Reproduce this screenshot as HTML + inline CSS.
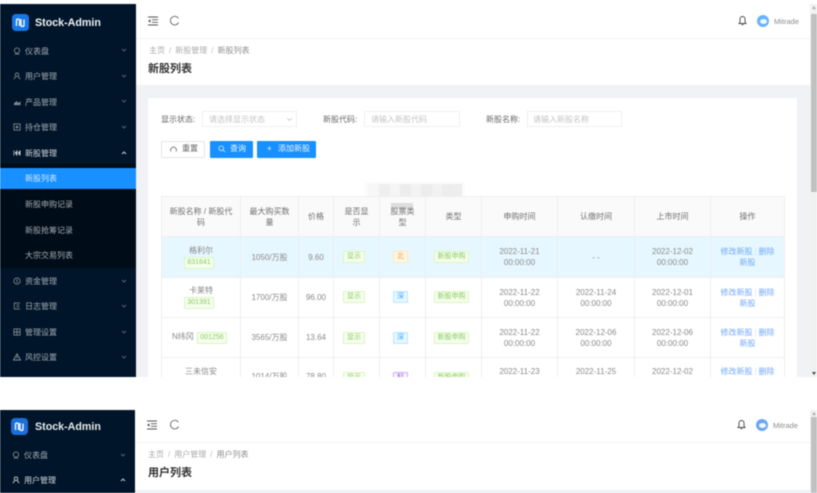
<!DOCTYPE html>
<html lang="zh">
<head>
<meta charset="utf-8">
<style>
html,body{margin:0;padding:0;width:817px;height:493px;overflow:hidden;background:#fff;font-family:"Liberation Sans","Noto Sans CJK SC",sans-serif;}
#root{position:relative;width:817px;height:493px;overflow:hidden;filter:blur(.5px);}
.a{position:absolute;}
.t{position:absolute;white-space:nowrap;font-size:8px;line-height:12px;margin-top:1px;}
.m{position:absolute;left:25px;color:#a3abb3;font-size:8px;line-height:12px;white-space:nowrap;margin-top:1px;}
.ic{position:absolute;left:13px;width:8px;height:8px;}
.ch{position:absolute;left:121px;width:6px;height:4px;}
.c{position:absolute;text-align:center;color:#8a8a8a;font-size:8px;line-height:11px;display:flex;align-items:center;justify-content:center;}
.hd{color:#6f6f6f;}
.tag{display:block;box-sizing:border-box;border:1px solid #d9f7be;background:#f6ffed;color:#8bc766;font-size:7px;line-height:10px;height:12px;border-radius:1px;text-align:center;}
.l{position:absolute;background:#eeeeee;}
.lk{color:#6fa8f5;white-space:nowrap;}
.sep{color:#d5e6fb;margin:0 2px;}
</style>
</head>
<body>
<div id="root">
<!-- top frame sidebar -->
<div class="a" style="left:0;top:4px;width:136px;height:373px;background:#001529;"></div>
<div class="a" style="left:0;top:164px;width:136px;height:104px;background:#000c17;"></div>
<div class="a" style="left:0;top:168px;width:136px;height:21px;background:#1890ff;"></div>
<div class="a" style="left:12px;top:14px;width:17px;height:17px;border-radius:4px;background:#1677e6;"></div>
<svg class="a" style="left:12px;top:14px" width="17" height="17" viewBox="0 0 17 17"><path d="M4.500 12V6.500Q4.500 5 6 5T7.500 6.500V12M9 5V11Q9 12.500 10.500 12.500T12 11V5.500" fill="none" stroke="#fff" stroke-width="1.300"/></svg>
<div class="t" style="left:35px;top:15px;color:#f0f2f5;font-size:10.700px;line-height:15px;font-weight:bold;">Stock-Admin</div>

<svg class="ic" style="top:47px" viewBox="0 0 9 9"><circle cx="4.500" cy="4" r="3" fill="none" stroke="#7d8791"/><path d="M2 8H7" stroke="#7d8791"/></svg><div class="m" style="top:45px">仪表盘</div>
<svg class="ic" style="top:72px" viewBox="0 0 9 9"><circle cx="4.500" cy="3" r="2" fill="none" stroke="#7d8791"/><path d="M1 8L3 5M8 8L6 5" stroke="#7d8791"/></svg><div class="m" style="top:70px">用户管理</div>
<svg class="ic" style="top:98px" viewBox="0 0 9 9"><path d="M1 1V8H8.500V4L6 5.500 4 3.500 1 6Z" fill="#7d8791"/></svg><div class="m" style="top:96px">产品管理</div>
<svg class="ic" style="top:123px" viewBox="0 0 9 9"><rect x="1" y="1" width="7" height="7" fill="none" stroke="#7d8791"/><circle cx="4.500" cy="4.500" r="1.500" fill="#7d8791"/></svg><div class="m" style="top:121px">持仓管理</div>
<svg class="ic" style="top:149px" viewBox="0 0 9 9"><path d="M1 1.500V7.500M2.500 4.500L4.500 2V7L2.500 4.500M8 1.500V7.500M6 4.500L7.500 2.500V6.500Z" stroke="#d0d4d8" fill="#d0d4d8" stroke-width=".8"/></svg><div class="m" style="top:147px;color:#d6dade">新股管理</div>
<div class="m" style="top:172px;color:#d8ebff">新股列表</div>
<div class="m" style="top:198px">新股申购记录</div>
<div class="m" style="top:224px">新股抢筹记录</div>
<div class="m" style="top:249px">大宗交易列表</div>
<svg class="ic" style="top:277px" viewBox="0 0 9 9"><circle cx="4.500" cy="4.500" r="3.500" fill="none" stroke="#7d8791"/><path d="M4.500 2.500V6.500" stroke="#7d8791"/></svg><div class="m" style="top:275px">资金管理</div>
<svg class="ic" style="top:302px" viewBox="0 0 9 9"><path d="M1 1H8M1.500 1V8M1.500 8H8M4 3.500H7M4 5.500H7" fill="none" stroke="#7d8791"/></svg><div class="m" style="top:300px">日志管理</div>
<svg class="ic" style="top:328px" viewBox="0 0 9 9"><path d="M1 1H8V8H1ZM1 4.500H8M4.500 1V8" fill="none" stroke="#7d8791"/></svg><div class="m" style="top:326px">管理设置</div>
<svg class="ic" style="top:353px" viewBox="0 0 9 9"><path d="M4.500 1L8.500 8H.5ZM4.500 3.500V6" fill="none" stroke="#8d969f"/></svg><div class="m" style="top:351px">风控设置</div>

<svg class="ch" style="top:48px" viewBox="0 0 6 4"><path d="M1 1L3 3 5 1" fill="none" stroke="#56626f"/></svg>
<svg class="ch" style="top:74px" viewBox="0 0 6 4"><path d="M1 1L3 3 5 1" fill="none" stroke="#56626f"/></svg>
<svg class="ch" style="top:99px" viewBox="0 0 6 4"><path d="M1 1L3 3 5 1" fill="none" stroke="#56626f"/></svg>
<svg class="ch" style="top:125px" viewBox="0 0 6 4"><path d="M1 1L3 3 5 1" fill="none" stroke="#56626f"/></svg>
<svg class="ch" style="top:151px" viewBox="0 0 6 4"><path d="M1 3L3 1 5 3" fill="none" stroke="#c8ccd0"/></svg>
<svg class="ch" style="top:279px" viewBox="0 0 6 4"><path d="M1 1L3 3 5 1" fill="none" stroke="#56626f"/></svg>
<svg class="ch" style="top:304px" viewBox="0 0 6 4"><path d="M1 1L3 3 5 1" fill="none" stroke="#56626f"/></svg>
<svg class="ch" style="top:330px" viewBox="0 0 6 4"><path d="M1 1L3 3 5 1" fill="none" stroke="#56626f"/></svg>
<svg class="ch" style="top:355px" viewBox="0 0 6 4"><path d="M1 1L3 3 5 1" fill="none" stroke="#56626f"/></svg>

<!-- top frame main -->
<div class="a" style="left:136px;top:85px;width:674px;height:292px;background:#f0f2f5;"></div>
<div class="a" style="left:136px;top:38px;width:674px;height:1px;background:#f3f3f3;"></div>
<svg class="a" style="left:148px;top:16px" width="10" height="10" viewBox="0 0 10 10"><path d="M0 1H10M4 3.700H10M4 6.300H10M0 9H10" stroke="#555" stroke-width=".9"/><path d="M0 5L2.500 3.300V6.700Z" fill="#555"/></svg>
<svg class="a" style="left:169px;top:15px" width="11" height="11" viewBox="0 0 11 11"><path d="M9.300 3.200A4.300 4.300 0 1 0 9.600 7.500" fill="none" stroke="#666" stroke-width=".9"/></svg>
<svg class="a" style="left:738px;top:15px" width="9" height="11" viewBox="0 0 9 11"><path d="M1 8.500H8L7 7V4A2.500 2.500 0 0 0 2 4V7ZM3.500 9.700H5.500" fill="none" stroke="#444" stroke-width=".9"/></svg>
<div class="a" style="left:757px;top:15px;width:12px;height:12px;border-radius:50%;background:#69b1ff;"></div>
<div class="a" style="left:760px;top:19px;width:7px;height:5px;border-radius:50%;background:#f0f7ff;"></div>
<div class="t" style="left:774px;top:15px;color:#8c8c8c;font-size:7.500px;">Mitrade</div>

<div class="t" style="left:149px;top:44px;color:#aaa;">主页<span style="margin:0 4px;color:#bbb">/</span>新股管理<span style="margin:0 4px;color:#bbb">/</span><span style="color:#8c8c8c">新股列表</span></div>
<div class="t" style="left:148px;top:61px;color:#333;font-size:11px;line-height:15px;font-weight:bold;">新股列表</div>

<!-- card -->
<div class="a" style="left:148px;top:98px;width:649px;height:279px;background:#fff;border-radius:1px;"></div>
<div class="t" style="left:161px;top:113px;color:#666;">显示状态:</div>
<div class="a" style="left:202px;top:111px;width:95px;height:16px;box-sizing:border-box;border:1px solid #efefef;background:#fff;"></div>
<div class="t" style="left:209px;top:113px;color:#c4c4c4;">请选择显示状态</div>
<svg class="a" style="left:286px;top:117px" width="7" height="5" viewBox="0 0 7 5"><path d="M1 1L3.500 3.500 6 1" fill="none" stroke="#c8c8c8" stroke-width=".8"/></svg>
<div class="t" style="left:323px;top:113px;color:#666;">新股代码:</div>
<div class="a" style="left:364px;top:111px;width:96px;height:16px;box-sizing:border-box;border:1px solid #efefef;"></div>
<div class="t" style="left:371px;top:113px;color:#c4c4c4;">请输入新股代码</div>
<div class="t" style="left:486px;top:113px;color:#666;">新股名称:</div>
<div class="a" style="left:527px;top:111px;width:95px;height:16px;box-sizing:border-box;border:1px solid #efefef;"></div>
<div class="t" style="left:533px;top:113px;color:#c4c4c4;">请输入新股名称</div>

<div class="a" style="left:161px;top:141px;width:44px;height:17px;box-sizing:border-box;border:1px solid #e6e6e6;border-radius:1px;background:#fff;"></div>
<svg class="a" style="left:170px;top:146px" width="7" height="7" viewBox="0 0 7 7"><path d="M1 5.500A2.900 2.900 0 1 1 6 5.500" fill="none" stroke="#666" stroke-width=".8"/></svg>
<div class="t" style="left:182px;top:142px;color:#666;">重置</div>
<div class="a" style="left:210px;top:141px;width:43px;height:17px;background:#1890ff;border-radius:1px;"></div>
<svg class="a" style="left:218px;top:145px" width="8" height="8" viewBox="0 0 8 8"><circle cx="3.300" cy="3.300" r="2.300" fill="none" stroke="#dcecff" stroke-width=".8"/><path d="M5 5L7 7" stroke="#dcecff" stroke-width=".8"/></svg>
<div class="t" style="left:230px;top:142px;color:#eef6ff;">查询</div>
<div class="a" style="left:257px;top:141px;width:59px;height:17px;background:#1890ff;border-radius:1px;"></div>
<div class="t" style="left:267px;top:142px;color:#eef6ff;">+</div>
<div class="t" style="left:278px;top:142px;color:#eef6ff;">添加新股</div>

<!-- mosaic -->
<div class="a" style="left:365px;top:182px;width:100px;height:23px;background:#fbfbfb;"></div>
<div class="a" style="left:368px;top:184px;width:11px;height:19px;background:#f7f7f7;"></div>
<div class="a" style="left:379px;top:184px;width:11px;height:19px;background:#efefef;"></div>
<div class="a" style="left:390px;top:184px;width:10px;height:19px;background:#f5f5f5;"></div>
<div class="a" style="left:400px;top:184px;width:11px;height:19px;background:#ececec;"></div>
<div class="a" style="left:411px;top:184px;width:10px;height:19px;background:#f3f3f3;"></div>
<div class="a" style="left:421px;top:184px;width:11px;height:19px;background:#ececec;"></div>
<div class="a" style="left:432px;top:184px;width:10px;height:19px;background:#f2f2f2;"></div>
<div class="a" style="left:442px;top:184px;width:10px;height:19px;background:#ededed;"></div>
<div class="a" style="left:452px;top:184px;width:10px;height:19px;background:#eeeeee;"></div>

<!-- table -->
<div class="a" style="left:161px;top:196px;width:624px;height:40px;background:#fafafa;"></div>
<div class="a" style="left:391px;top:203px;width:22px;height:6px;background:#dddddd;"></div>
<div class="a" style="left:161px;top:236px;width:624px;height:41px;background:#e6f7ff;"></div>
<div class="l" style="left:161px;top:196px;width:624px;height:1px"></div>
<div class="l" style="left:161px;top:236px;width:624px;height:1px"></div>
<div class="l" style="left:161px;top:277px;width:624px;height:1px"></div>
<div class="l" style="left:161px;top:317px;width:624px;height:1px"></div>
<div class="l" style="left:161px;top:357px;width:624px;height:1px"></div>
<div class="l" style="left:161px;top:196px;width:1px;height:181px"></div>
<div class="l" style="left:240px;top:196px;width:1px;height:181px"></div>
<div class="l" style="left:298px;top:196px;width:1px;height:181px"></div>
<div class="l" style="left:333px;top:196px;width:1px;height:181px"></div>
<div class="l" style="left:379px;top:196px;width:1px;height:181px"></div>
<div class="l" style="left:425px;top:196px;width:1px;height:181px"></div>
<div class="l" style="left:481px;top:196px;width:1px;height:181px"></div>
<div class="l" style="left:557px;top:196px;width:1px;height:181px"></div>
<div class="l" style="left:634px;top:196px;width:1px;height:181px"></div>
<div class="l" style="left:710px;top:196px;width:1px;height:181px"></div>
<div class="l" style="left:784px;top:196px;width:1px;height:181px"></div>

<!-- header -->
<div class="c hd" style="left:162px;top:197px;width:78px;height:39px;"><div>新股名称 / 新股代<br>码</div></div>
<div class="c hd" style="left:241px;top:197px;width:57px;height:39px;"><div>最大购买数<br>量</div></div>
<div class="c hd" style="left:299px;top:197px;width:34px;height:39px;">价格</div>
<div class="c hd" style="left:334px;top:197px;width:45px;height:39px;"><div>是否显<br>示</div></div>
<div class="c hd" style="left:380px;top:197px;width:45px;height:39px;"><div>股票类<br>型</div></div>
<div class="c hd" style="left:426px;top:197px;width:55px;height:39px;">类型</div>
<div class="c hd" style="left:482px;top:197px;width:75px;height:39px;">申购时间</div>
<div class="c hd" style="left:558px;top:197px;width:76px;height:39px;">认缴时间</div>
<div class="c hd" style="left:635px;top:197px;width:75px;height:39px;">上市时间</div>
<div class="c hd" style="left:711px;top:197px;width:73px;height:39px;">操作</div>

<!-- row 1 -->
<div class="t" style="left:162px;top:244px;width:78px;text-align:center;color:#888;">格利尔</div>
<div class="tag a" style="left:184px;top:257px;width:30px;">831641</div>
<div class="c" style="left:241px;top:237px;width:57px;height:40px;">1050/万股</div>
<div class="c" style="left:299px;top:237px;width:34px;height:40px;">9.60</div>
<div class="tag a" style="left:343px;top:251px;width:22px;">显示</div>
<div class="tag a" style="left:393px;top:251px;width:15px;background:#fff7e6;border-color:#ffe7ba;color:#fa9a3c;">北</div>
<div class="tag a" style="left:434px;top:251px;width:35px;">新股申购</div>
<div class="c" style="left:482px;top:237px;width:75px;height:40px;"><div>2022-11-21<br>00:00:00</div></div>
<div class="c" style="left:558px;top:237px;width:76px;height:40px;">- -</div>
<div class="c" style="left:635px;top:237px;width:75px;height:40px;"><div>2022-12-02<br>00:00:00</div></div>
<div class="c lk" style="left:711px;top:237px;width:73px;height:40px;"><div>修改新股<span class="sep">|</span>删除<br>新股</div></div>

<!-- row 2 -->
<div class="t" style="left:162px;top:284px;width:78px;text-align:center;color:#888;">卡莱特</div>
<div class="tag a" style="left:184px;top:297px;width:30px;">301391</div>
<div class="c" style="left:241px;top:278px;width:57px;height:39px;">1700/万股</div>
<div class="c" style="left:299px;top:278px;width:34px;height:39px;">96.00</div>
<div class="tag a" style="left:343px;top:291px;width:22px;">显示</div>
<div class="tag a" style="left:393px;top:291px;width:15px;background:#e6f7ff;border-color:#bae7ff;color:#40a9ff;">深</div>
<div class="tag a" style="left:434px;top:291px;width:35px;">新股申购</div>
<div class="c" style="left:482px;top:278px;width:75px;height:39px;"><div>2022-11-22<br>00:00:00</div></div>
<div class="c" style="left:558px;top:278px;width:76px;height:39px;"><div>2022-11-24<br>00:00:00</div></div>
<div class="c" style="left:635px;top:278px;width:75px;height:39px;"><div>2022-12-01<br>00:00:00</div></div>
<div class="c lk" style="left:711px;top:278px;width:73px;height:39px;"><div>修改新股<span class="sep">|</span>删除<br>新股</div></div>

<!-- row 3 -->
<div class="t" style="left:172px;top:330px;color:#888;">N纬冈</div>
<div class="tag a" style="left:197px;top:332px;width:30px;">001256</div>
<div class="c" style="left:241px;top:318px;width:57px;height:39px;">3565/万股</div>
<div class="c" style="left:299px;top:318px;width:34px;height:39px;">13.64</div>
<div class="tag a" style="left:343px;top:332px;width:22px;">显示</div>
<div class="tag a" style="left:393px;top:332px;width:15px;background:#e6f7ff;border-color:#bae7ff;color:#40a9ff;">深</div>
<div class="tag a" style="left:434px;top:332px;width:35px;">新股申购</div>
<div class="c" style="left:482px;top:318px;width:75px;height:39px;"><div>2022-11-22<br>00:00:00</div></div>
<div class="c" style="left:558px;top:318px;width:76px;height:39px;"><div>2022-12-06<br>00:00:00</div></div>
<div class="c" style="left:635px;top:318px;width:75px;height:39px;"><div>2022-12-06<br>00:00:00</div></div>
<div class="c lk" style="left:711px;top:318px;width:73px;height:39px;"><div>修改新股<span class="sep">|</span>删除<br>新股</div></div>

<!-- row 4 -->
<div class="t" style="left:162px;top:365px;width:78px;text-align:center;color:#888;">三未信安</div>
<div class="t" style="left:241px;top:370px;width:57px;text-align:center;color:#8a8a8a;">1014/万股</div>
<div class="t" style="left:299px;top:370px;width:34px;text-align:center;color:#8a8a8a;">78.80</div>
<div class="tag a" style="left:343px;top:372px;width:22px;">显示</div>
<div class="tag a" style="left:393px;top:372px;width:15px;background:#f9f0ff;border-color:#d3adf7;color:#9254de;">科</div>
<div class="tag a" style="left:434px;top:372px;width:35px;">新股申购</div>
<div class="t" style="left:482px;top:365px;width:75px;text-align:center;color:#8a8a8a;">2022-11-23</div>
<div class="t" style="left:558px;top:365px;width:76px;text-align:center;color:#8a8a8a;">2022-11-25</div>
<div class="t" style="left:635px;top:365px;width:75px;text-align:center;color:#8a8a8a;">2022-12-02</div>
<div class="t lk" style="left:711px;top:365px;width:73px;text-align:center;">修改新股<span class="sep">|</span>删除</div>

<!-- scrollbar top -->
<div class="a" style="left:810px;top:4px;width:7px;height:373px;background:#f1f1f1;"></div>
<div class="a" style="left:811px;top:14px;width:6px;height:178px;background:#c1c1c1;"></div>
<div class="a" style="left:812px;top:6px;border-left:2px solid transparent;border-right:2px solid transparent;border-bottom:3px solid #aaa;"></div>
<div class="a" style="left:812px;top:372px;border-left:2px solid transparent;border-right:2px solid transparent;border-top:3px solid #444;"></div>

<!-- white gap -->
<div class="a" style="left:0;top:377px;width:817px;height:33px;background:#fff;"></div>

<!-- bottom frame -->
<div class="a" style="left:0;top:410px;width:135px;height:83px;background:#001529;"></div>
<div class="a" style="left:11px;top:418px;width:17px;height:17px;border-radius:4px;background:#1a6fd8;"></div>
<svg class="a" style="left:11px;top:418px" width="17" height="17" viewBox="0 0 17 17"><path d="M4.500 12V6.500Q4.500 5 6 5T7.500 6.500V12M9 5V11Q9 12.500 10.500 12.500T12 11V5.500" fill="none" stroke="#fff" stroke-width="1.300"/></svg>
<div class="t" style="left:35px;top:419px;color:#e8eaed;font-size:10.700px;line-height:15px;font-weight:bold;">Stock-Admin</div>
<svg class="ic" style="top:451px;left:12px" viewBox="0 0 9 9"><circle cx="4.500" cy="4" r="3" fill="none" stroke="#7d8791"/><path d="M2 8H7" stroke="#7d8791"/></svg><div class="m" style="top:449px;left:24px">仪表盘</div>
<svg class="ic" style="top:476px;left:12px" viewBox="0 0 9 9"><circle cx="4.500" cy="3" r="2" fill="none" stroke="#d0d4d8"/><path d="M1 8L3 5M8 8L6 5" stroke="#d0d4d8"/></svg><div class="m" style="top:474px;left:24px;color:#d6dade">用户管理</div>
<svg class="ch" style="top:453px;left:120px" viewBox="0 0 6 4"><path d="M1 1L3 3 5 1" fill="none" stroke="#56626f"/></svg>
<svg class="ch" style="top:478px;left:120px" viewBox="0 0 6 4"><path d="M1 3L3 1 5 3" fill="none" stroke="#c8ccd0"/></svg>

<div class="a" style="left:135px;top:442px;width:675px;height:1px;background:#f3f3f3;"></div>
<div class="a" style="left:135px;top:490px;width:675px;height:3px;background:#f0f2f5;"></div>
<svg class="a" style="left:147px;top:420px" width="10" height="10" viewBox="0 0 10 10"><path d="M0 1H10M4 3.700H10M4 6.300H10M0 9H10" stroke="#555" stroke-width=".9"/><path d="M0 5L2.500 3.300V6.700Z" fill="#555"/></svg>
<svg class="a" style="left:169px;top:419px" width="11" height="11" viewBox="0 0 11 11"><path d="M9.300 3.200A4.300 4.300 0 1 0 9.600 7.500" fill="none" stroke="#666" stroke-width=".9"/></svg>
<svg class="a" style="left:737px;top:419px" width="9" height="11" viewBox="0 0 9 11"><path d="M1 8.500H8L7 7V4A2.500 2.500 0 0 0 2 4V7ZM3.500 9.700H5.500" fill="none" stroke="#444" stroke-width=".9"/></svg>
<div class="a" style="left:756px;top:419px;width:12px;height:12px;border-radius:50%;background:#69a6f5;"></div>
<div class="a" style="left:759px;top:423px;width:7px;height:5px;border-radius:50%;background:#f0f7ff;"></div>
<div class="t" style="left:773px;top:419px;color:#8c8c8c;font-size:7.500px;">Mitrade</div>
<div class="t" style="left:148px;top:448px;color:#aaa;">主页<span style="margin:0 4px;color:#bbb">/</span>用户管理<span style="margin:0 4px;color:#bbb">/</span><span style="color:#8c8c8c">用户列表</span></div>
<div class="t" style="left:148px;top:465px;color:#333;font-size:11px;line-height:15px;font-weight:bold;">用户列表</div>
<div class="a" style="left:810px;top:410px;width:7px;height:83px;background:#f1f1f1;"></div>
<div class="a" style="left:811px;top:417px;width:6px;height:76px;background:#c1c1c1;"></div>
<div class="a" style="left:812px;top:412px;border-left:2px solid transparent;border-right:2px solid transparent;border-bottom:3px solid #aaa;"></div>
</div>
</body>
</html>
